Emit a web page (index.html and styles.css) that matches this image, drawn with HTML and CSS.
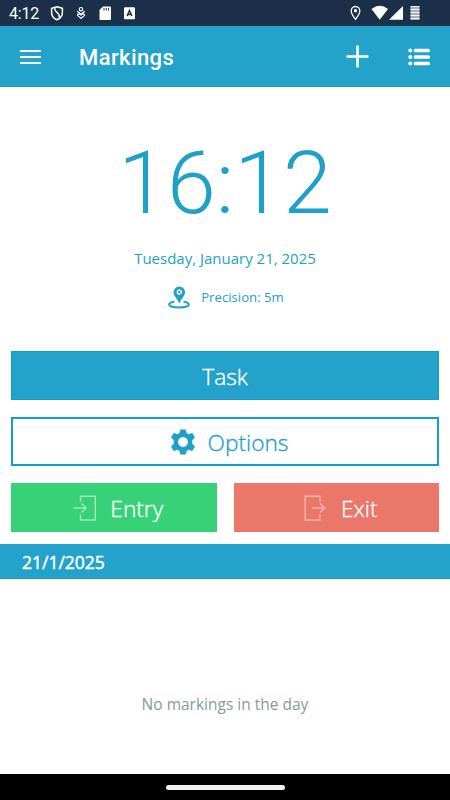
FILE: index.html
```
<!DOCTYPE html>
<html lang="en">
<head>
<meta charset="utf-8">
<title>Markings</title>
<link rel="stylesheet" href="styles.css">
</head>
<body>
<div class="app">
  <div class="status">
    <span class="status-time">4:12</span>
    <svg class="status-left" width="86" height="26" viewBox="0 0 86 26">
      <path d="M7 6.700L12.400 8.400V12.800C12.400 16.200 10 18.700 7 19.800C4 18.700 1.600 16.200 1.600 12.800V8.400Z" fill="none" stroke="#fff" stroke-width="1.500"/>
      <path d="M4.800 7.500C3.500 12.500 10.500 12 9.500 18.300" fill="none" stroke="#fff" stroke-width="1.400"/>
      <g fill="none" stroke="#fff" stroke-width="1.200"><circle cx="31" cy="9.200" r="1.700"/><path d="M27.200 11.200L31 14.200L34.800 11.200M31 18.400L27.800 15.600C27 14.500 28.500 13 31 15C33.500 13 35 14.500 34.200 15.600Z"/></g>
      <path d="M53 6.500H60Q61 6.500 61 7.500V19Q61 20 60 20H50.500Q49.500 20 49.500 19V10Z" fill="#fff"/>
      <path d="M54 8V10.500M56.300 8V10.500M58.600 8V10.500" stroke="#1b3048" stroke-width="1"/>
      <rect x="74" y="7.200" width="11" height="12" rx="1" fill="#fff"/>
      <path d="M77 16L79.500 10.500L82 16M78 14.500H81" fill="none" stroke="#1b3048" stroke-width="1.400"/>
    </svg>
    <svg class="status-right" width="70" height="26" viewBox="0 0 70 26">
      <path d="M5.500 19.300C3.500 16.600 1.200 14 1.200 11A4.300 4.500 0 0 1 9.800 11C9.800 14 7.500 16.600 5.500 19.300Z" fill="none" stroke="#fff" stroke-width="1.300"/>
      <circle cx="5.500" cy="10.800" r="1.700" fill="#fff"/>
      <path d="M21.500 9Q29.700 2.300 38 9L29.700 19.700Z" fill="#fff"/>
      <path d="M39 19.700H53V6Z" fill="#fff"/>
      <path d="M60.500 6H69.500V20H60.500Z" fill="#a8b0b9"/>
      <path d="M60.500 6.500H69.500M60.500 9.500H69.500M60.500 12.500H69.500M60.500 15.500H69.500M60.500 18.500H69.500" stroke="#f0f2f4" stroke-width="1"/>
    </svg>
  </div>
  <header class="bar">
    <svg class="menu" width="21" height="16" viewBox="0 0 21 16"><path d="M0 2H21M0 8H21M0 14H21" stroke="#fff" stroke-width="2"/></svg>
    <h1 class="title">Markings</h1>
    <svg class="add" width="23" height="23" viewBox="0 0 23 23"><path d="M0.500 11.500H22.500M11.500 0.500V22.500" stroke="#fff" stroke-width="2.600"/></svg>
    <svg class="list" width="22" height="18" viewBox="0 0 22 18"><g fill="#fff"><circle cx="2.300" cy="2.500" r="2"/><circle cx="2.300" cy="9" r="2"/><circle cx="2.300" cy="15.500" r="2"/><rect x="5.700" y="0.700" width="16.300" height="3.600" rx="1.500"/><rect x="5.700" y="7.200" width="16.300" height="3.600" rx="1.500"/><rect x="5.700" y="13.700" width="16.300" height="3.600" rx="1.500"/></g></svg>
  </header>
  <main class="content">
    <div class="clock"><span class="clock-text">16:12</span></div>
    <div class="date"><span class="date-text">Tuesday, January 21, 2025</span></div>
    <div class="precision">
      <svg width="22" height="23" viewBox="0 0 22 23"><path d="M6.500 15.400C3.300 16 1.100 17.200 1.100 18.600C1.100 20.400 5.500 21.500 11 21.500S20.900 20.400 20.900 18.600C20.900 17.200 18.700 16 15.500 15.400" fill="none" stroke="#1ea0c9" stroke-width="2"/><path fill-rule="evenodd" d="M11.300 0.500A5.800 5.800 0 0 0 5.500 6.300C5.500 10 9.200 12.500 11.300 17.500C13.400 12.500 17.100 10 17.100 6.300A5.800 5.800 0 0 0 11.300 0.500ZM11.300 3.400A2.700 2.700 0 1 1 11.300 8.800A2.700 2.700 0 1 1 11.300 3.400Z" fill="#1ea0c9"/><circle cx="11.300" cy="6.100" r="1.300" fill="#1ea0c9"/></svg>
      <span class="precision-text">Precision: 5m</span>
    </div>
    <div class="actions">
      <div class="btn task"><span class="task-text">Task</span></div>
      <div class="btn options">
        <svg width="28" height="30" viewBox="0 0 28 30"><path fill="#1ea0c9" stroke="#1ea0c9" stroke-width="0.600" stroke-linejoin="round" fill-rule="evenodd" d="M11.500 2.800H16.500L17.300 6.100L19.600 7.400L23.200 6.200L25.700 10.500L23 13.300V16.700L25.700 19.500L23.200 23.800L19.600 22.600L17.300 23.900L16.500 27.200H11.500L10.700 23.900L8.400 22.600L4.800 23.800L2.300 19.500L5 16.700V13.300L2.300 10.500L4.800 6.200L8.400 7.400L10.700 6.100ZM14 9.800A5.200 5.200 0 1 0 14 20.200A5.200 5.200 0 1 0 14 9.800Z"/></svg>
        <span class="options-text">Options</span>
      </div>
      <div class="pair">
        <div class="btn entry">
          <svg width="24" height="26" viewBox="0 0 24 26" fill="none" stroke="#a0e8bb" stroke-width="1.400"><path d="M7.500 6.500V1.200H22.300V25H7.500V19.500M0.500 13H13M8.500 8.500L13.200 13L8.500 17.500"/></svg>
          <span class="entry-text">Entry</span>
        </div>
        <div class="btn exit">
          <svg width="22" height="26" viewBox="0 0 22 26" fill="none" stroke="#f5b5ad" stroke-width="1.400"><path d="M16 6.500V1.200H1.200V25H16V19.500M8 13H21M16 8.500L20.700 13L16 17.500"/></svg>
          <span class="exit-text">Exit</span>
        </div>
      </div>
    </div>
    <div class="day"><span class="day-text">21/1/2025</span></div>
    <div class="empty"><span class="empty-text">No markings in the day</span></div>
  </main>
  <footer class="nav"><div class="handle"></div></footer>
</div>
</body>
</html>
```
FILE: styles.css
```
* { box-sizing: border-box; }
body { margin: 0; background: #fff; font-family: "Open Sans", sans-serif; }
svg { display: block; flex: none; }
span { white-space: nowrap; }
.app { width: 450px; height: 800px; display: flex; flex-direction: column; overflow: hidden; }
.status { height: 26px; flex: none; background: #1b3048; display: flex; align-items: center; padding: 0 30px 0 9px; color: #fff; }
.status-time { width: 41px; font: 400 16px/26px Roboto, sans-serif; padding-top: 1px; letter-spacing: -0.200px; }
.status-right { margin-left: auto; }
.bar { height: 61px; flex: none; background: #23a2cb; border-bottom: 1px solid #159fc8; display: flex; align-items: center; padding: 1px 20px 0; color: #fff; }
.title { margin: 3px auto 0 38px; font: 500 22px/30px Roboto, sans-serif; letter-spacing: 0.4px; }
.list { margin-left: 39px; }
.content { flex: 1; display: flex; flex-direction: column; color: #1ea0c9; }
.clock { height: 104px; margin-top: 44px; text-align: center; font: 300 88px/104px Roboto, sans-serif; }
.date { height: 24px; margin-top: 11px; text-align: center; font-size: 15px; line-height: 24px; }
.precision { height: 24px; margin-top: 15px; padding-left: 2px; display: flex; justify-content: center; align-items: center; gap: 11px; font-size: 13.200px; }
.actions { margin: 42px 11px 0; display: grid; gap: 17px; }
.btn { height: 49px; display: flex; align-items: center; justify-content: center; font-size: 22.700px; font-weight: 300; -webkit-text-stroke: 0.350px currentColor; color: #fff; }
.task { background: #23a2cb; border: 1px solid #0f9dc8; }
.options { border: 2px solid #0f9fc8; color: #1ea0c9; gap: 11px; padding-left: 7px; }
.pair { display: grid; grid-template-columns: 1fr 1fr; gap: 17px; }
.entry { background: #37d278; gap: 13px; padding-left: 9px; }
.exit { background: #eb766a; gap: 15px; padding-left: 9px; }
.btn span { padding-top: 1px; }
.day { height: 35px; margin-top: 12px; padding-left: 22px; background: #23a2cb; border-bottom: 1px solid #109dc8; color: #fff; font-size: 17.500px; -webkit-text-stroke: 0.450px currentColor; line-height: 36px; }
.empty { margin-top: 113px; text-align: center; color: #849c9b; font-size: 15.500px; line-height: 24px; }
.nav { height: 26px; flex: none; background: #000; display: flex; align-items: center; justify-content: center; }
.handle { width: 119px; height: 5px; border-radius: 3px; background: #f0f0f0; }
```
